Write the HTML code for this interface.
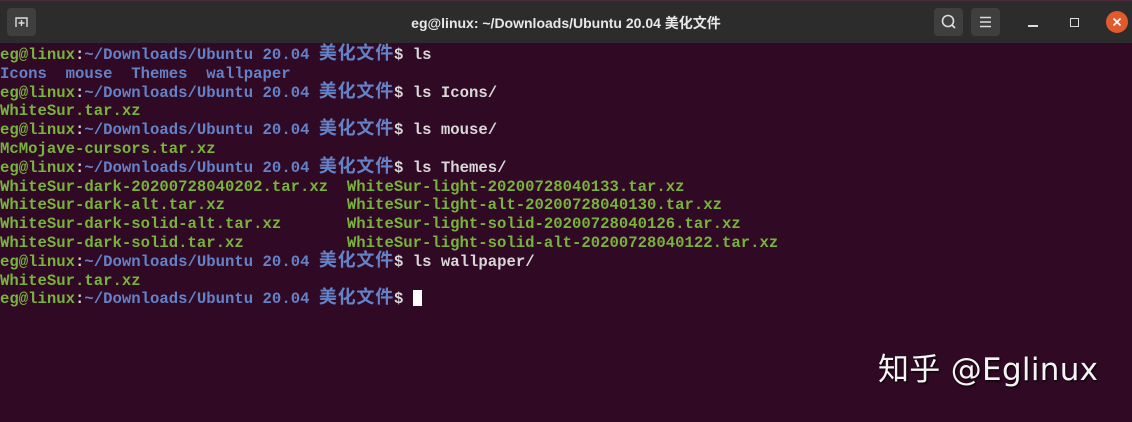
<!DOCTYPE html><html><head><meta charset="utf-8"><style>
body{margin:0;width:1132px;height:422px;background:#300a24;overflow:hidden;position:relative;font-family:"Liberation Sans","Noto Sans CJK SC",sans-serif}
.tb{position:absolute;left:0;top:0;width:1132px;height:43px;background:#2c2c2c;border-top:1px solid #4a2a3a;box-sizing:border-box}
.title{position:absolute;left:0;right:0;top:12px;text-align:center;color:#e8e8e8;font-size:14px;font-weight:bold}
.btn{position:absolute;top:7px;width:29px;height:28px;background:#3f3f3f;border-radius:4px}
pre{position:absolute;left:0;top:46px;margin:0;font-family:"Liberation Mono","Noto Sans CJK SC",monospace;font-size:15.63px;line-height:18.8px;font-weight:bold;color:#d3d7cf}
.g{color:#78b33b}.b{color:#6482c8}.w{color:#d8d8d8}
.c{font-size:18px;letter-spacing:0.8px;line-height:10px}
.cur{display:inline-block;width:9px;height:16px;background:#fff;vertical-align:-3px}
.wm{position:absolute;left:878px;top:344px;color:#f4f4f4;font-family:"DejaVu Sans","Noto Sans CJK SC",sans-serif;font-size:31px;letter-spacing:0.3px;text-shadow:1px 1px 2px #000}
</style></head><body>
<div class="tb">
<div class="btn" style="left:7px"><svg width="29" height="28"><path d="M9 19V10h11v9" stroke="#ddd" fill="none" stroke-width="1.4"/><path d="M14.5 12v6M11.5 15h6" stroke="#ddd" stroke-width="1.4"/></svg></div>
<div class="title">eg@linux: ~/Downloads/Ubuntu 20.04 美化文件</div>
<div class="btn" style="left:934px"><svg width="29" height="28"><circle cx="14" cy="13" r="5.5" stroke="#ddd" stroke-width="1.6" fill="none"/><path d="M18 17l3 3" stroke="#ddd" stroke-width="1.8"/></svg></div>
<div class="btn" style="left:971px"><svg width="29" height="28"><path d="M9 9.5h11M9 14h11M9 18.5h11" stroke="#ddd" stroke-width="1.4"/></svg></div>
<div style="position:absolute;left:1028px;top:24px;width:10px;height:1.5px;background:#ddd"></div>
<div style="position:absolute;left:1070px;top:17px;width:7px;height:7px;border:1.5px solid #ddd"></div>
<div style="position:absolute;left:1106px;top:10px;width:22px;height:22px;border-radius:50%;background:#e05a2b"><svg width="22" height="22"><path d="M7.5 7.5l7 7M14.5 7.5l-7 7" stroke="#fff" stroke-width="1.7"/></svg></div>
</div>
<pre><span class="g">eg@linux</span><span class="w">:</span><span class="b">~/Downloads/Ubuntu 20.04 <span class="c">美化文件</span></span><span class="w">$ ls</span>
<span class="b">Icons  mouse  Themes  wallpaper</span>
<span class="g">eg@linux</span><span class="w">:</span><span class="b">~/Downloads/Ubuntu 20.04 <span class="c">美化文件</span></span><span class="w">$ ls Icons/</span>
<span class="g">WhiteSur.tar.xz</span>
<span class="g">eg@linux</span><span class="w">:</span><span class="b">~/Downloads/Ubuntu 20.04 <span class="c">美化文件</span></span><span class="w">$ ls mouse/</span>
<span class="g">McMojave-cursors.tar.xz</span>
<span class="g">eg@linux</span><span class="w">:</span><span class="b">~/Downloads/Ubuntu 20.04 <span class="c">美化文件</span></span><span class="w">$ ls Themes/</span>
<span class="g">WhiteSur-dark-20200728040202.tar.xz  WhiteSur-light-20200728040133.tar.xz
WhiteSur-dark-alt.tar.xz             WhiteSur-light-alt-20200728040130.tar.xz
WhiteSur-dark-solid-alt.tar.xz       WhiteSur-light-solid-20200728040126.tar.xz
WhiteSur-dark-solid.tar.xz           WhiteSur-light-solid-alt-20200728040122.tar.xz</span>
<span class="g">eg@linux</span><span class="w">:</span><span class="b">~/Downloads/Ubuntu 20.04 <span class="c">美化文件</span></span><span class="w">$ ls wallpaper/</span>
<span class="g">WhiteSur.tar.xz</span>
<span class="g">eg@linux</span><span class="w">:</span><span class="b">~/Downloads/Ubuntu 20.04 <span class="c">美化文件</span></span><span class="w">$ </span><span class="cur"></span></pre>
<div class="wm">知乎 @Eglinux</div>
</body></html>
